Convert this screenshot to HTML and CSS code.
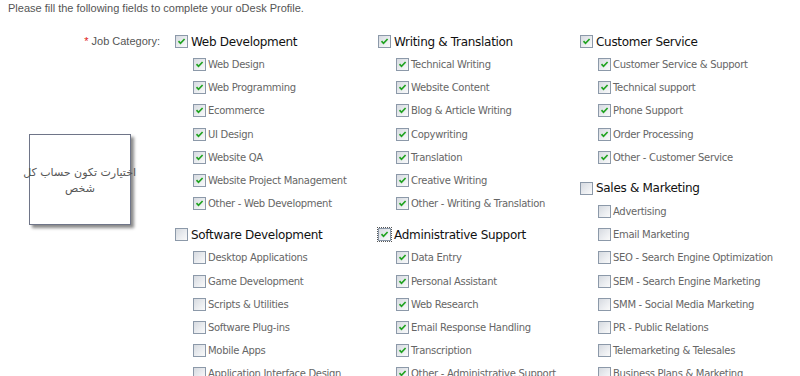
FILE: index.html
```html
<!DOCTYPE html>
<html>
<head>
<meta charset="utf-8">
<link rel="stylesheet" href="styles.css">
</head>
<body>
<p class="intro">Please fill the following fields to complete your oDesk Profile.</p>
<div class="form">
  <div class="label-col">
    <div class="label"><span class="req">*</span> Job Category:</div>
    <div class="note"><span class="note-text">اختيارت تكون حساب كل<br>شخص</span></div>
  </div>
  <div class="col">
    <div class="group">
      <div class="head"><span class="cb on"></span>Web Development</div>
      <div class="item"><span class="cb on"></span>Web Design</div>
      <div class="item"><span class="cb on"></span>Web Programming</div>
      <div class="item"><span class="cb on"></span>Ecommerce</div>
      <div class="item"><span class="cb on"></span>UI Design</div>
      <div class="item"><span class="cb on"></span>Website QA</div>
      <div class="item"><span class="cb on"></span>Website Project Management</div>
      <div class="item"><span class="cb on"></span>Other - Web Development</div>
    </div>
    <div class="group">
      <div class="head"><span class="cb"></span>Software Development</div>
      <div class="item"><span class="cb"></span>Desktop Applications</div>
      <div class="item"><span class="cb"></span>Game Development</div>
      <div class="item"><span class="cb"></span>Scripts &amp; Utilities</div>
      <div class="item"><span class="cb"></span>Software Plug-ins</div>
      <div class="item"><span class="cb"></span>Mobile Apps</div>
      <div class="item"><span class="cb"></span>Application Interface Design</div>
    </div>
  </div>
  <div class="col">
    <div class="group">
      <div class="head"><span class="cb on"></span>Writing &amp; Translation</div>
      <div class="item"><span class="cb on"></span>Technical Writing</div>
      <div class="item"><span class="cb on"></span>Website Content</div>
      <div class="item"><span class="cb on"></span>Blog &amp; Article Writing</div>
      <div class="item"><span class="cb on"></span>Copywriting</div>
      <div class="item"><span class="cb on"></span>Translation</div>
      <div class="item"><span class="cb on"></span>Creative Writing</div>
      <div class="item"><span class="cb on"></span>Other - Writing &amp; Translation</div>
    </div>
    <div class="group">
      <div class="head"><span class="cb on focus"></span>Administrative Support</div>
      <div class="item"><span class="cb on"></span>Data Entry</div>
      <div class="item"><span class="cb on"></span>Personal Assistant</div>
      <div class="item"><span class="cb on"></span>Web Research</div>
      <div class="item"><span class="cb on"></span>Email Response Handling</div>
      <div class="item"><span class="cb on"></span>Transcription</div>
      <div class="item"><span class="cb on"></span>Other - Administrative Support</div>
    </div>
  </div>
  <div class="col">
    <div class="group">
      <div class="head"><span class="cb on"></span>Customer Service</div>
      <div class="item"><span class="cb on"></span>Customer Service &amp; Support</div>
      <div class="item"><span class="cb on"></span>Technical support</div>
      <div class="item"><span class="cb on"></span>Phone Support</div>
      <div class="item"><span class="cb on"></span>Order Processing</div>
      <div class="item"><span class="cb on"></span>Other - Customer Service</div>
    </div>
    <div class="group">
      <div class="head"><span class="cb"></span>Sales &amp; Marketing</div>
      <div class="item"><span class="cb"></span>Advertising</div>
      <div class="item"><span class="cb"></span>Email Marketing</div>
      <div class="item"><span class="cb"></span>SEO - Search Engine Optimization</div>
      <div class="item"><span class="cb"></span>SEM - Search Engine Marketing</div>
      <div class="item"><span class="cb"></span>SMM - Social Media Marketing</div>
      <div class="item"><span class="cb"></span>PR - Public Relations</div>
      <div class="item"><span class="cb"></span>Telemarketing &amp; Telesales</div>
      <div class="item"><span class="cb"></span>Business Plans &amp; Marketing</div>
    </div>
  </div>
</div>
</body>
</html>
```
FILE: styles.css
```css
html, body {
  margin: 0;
  padding: 0;
  background: #fff;
  overflow: hidden;
}
body {
  padding: 0 8px;
  font-family: "Liberation Sans", Arial, sans-serif;
}
.intro {
  margin: 0;
  padding-top: 2px;
  height: 28px;
  font-size: 11px;
  line-height: 13px;
  color: #555;
}
.form {
  display: grid;
  grid-template-columns: 166px 203px 202px 213px;
  align-items: start;
}
.label-col {
  display: flex;
  flex-direction: column;
}
.label {
  height: 23px;
  line-height: 23px;
  padding-right: 14px;
  text-align: right;
  font-size: 11px;
  color: #555;
}
.req {
  color: #e02020;
}
.note {
  box-sizing: border-box;
  margin-top: 81px;
  margin-left: 21px;
  width: 102px;
  height: 91px;
  border: 1px solid #6f7588;
  box-shadow: 3px 3px 3px #8a8a8a;
  background: #fff;
  display: flex;
  align-items: center;
  justify-content: center;
}
.note-text {
  flex: none;
  width: 112px;
  margin-top: 2px;
  text-align: center;
  direction: rtl;
  font-family: "DejaVu Sans", sans-serif;
  font-size: 11px;
  line-height: 16px;
  letter-spacing: 0.3px;
  color: #555;
  white-space: nowrap;
}
.col {
  display: flex;
  flex-direction: column;
}
.group + .group {
  margin-top: 8px;
}
.head {
  display: flex;
  align-items: center;
  height: 23px;
  padding-left: 1px;
  font-family: "DejaVu Sans", Verdana, sans-serif;
  font-size: 12px;
  letter-spacing: -0.3px;
  color: #111;
  white-space: nowrap;
}
.item {
  display: flex;
  align-items: center;
  height: 23.2px;
  padding-left: 19px;
  font-family: "DejaVu Sans", Verdana, sans-serif;
  font-size: 10px;
  letter-spacing: -0.3px;
  color: #666;
  white-space: nowrap;
}
.cb {
  flex: none;
  box-sizing: border-box;
  width: 13px;
  height: 13px;
  margin-right: 3px;
  border: 1px solid #8c99a9;
  background: linear-gradient(135deg, #d6dae0 0%, #eceef1 60%, #fafafa 100%);
}
.item .cb {
  margin-right: 2px;
}
.cb.on {
  background:
    url("data:image/svg+xml,%3Csvg xmlns='http://www.w3.org/2000/svg' width='11' height='11' viewBox='0 0 11 11'%3E%3Cpath d='M2.5 5.2 L4.5 7.3 L8.6 3' fill='none' stroke='%2321a321' stroke-width='1.7'/%3E%3C/svg%3E") center / 11px 11px no-repeat,
    linear-gradient(135deg, #d6dae0 0%, #eceef1 60%, #fafafa 100%);
}
.cb.focus {
  outline: 1px dotted #555;
  outline-offset: 0px;
}
```
